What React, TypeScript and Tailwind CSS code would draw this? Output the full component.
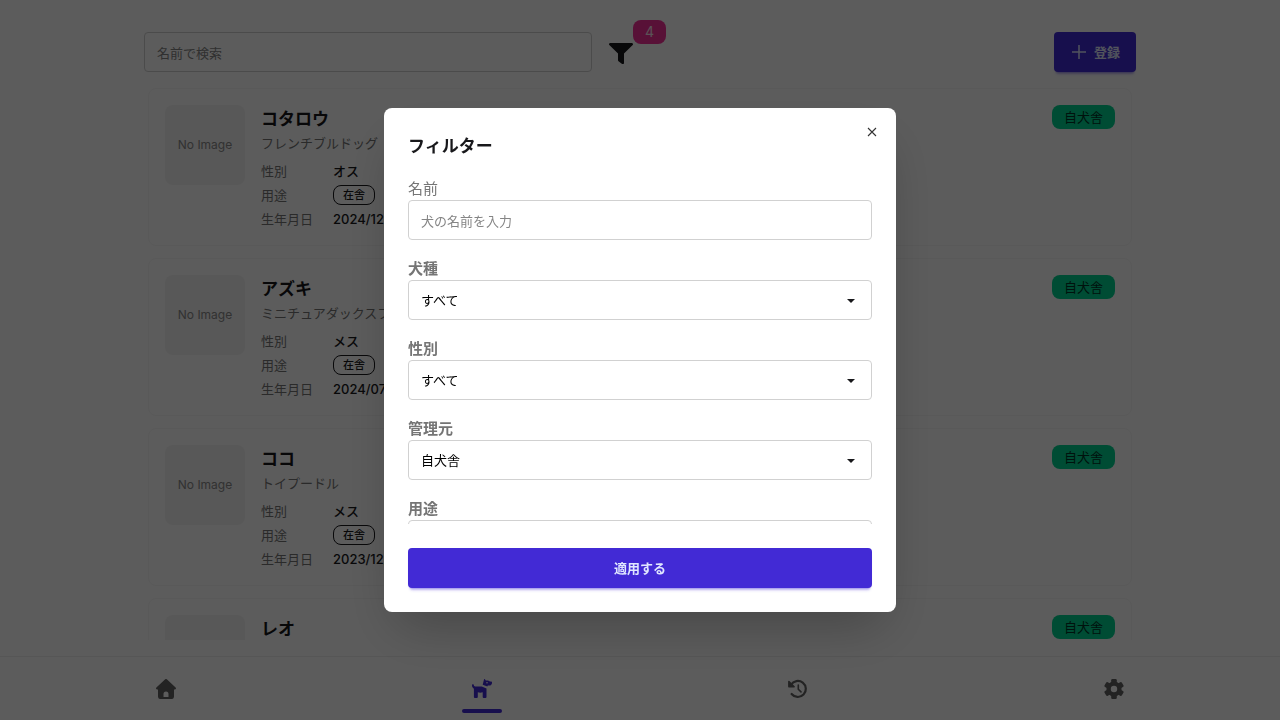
import type { ReactNode } from "react";

interface Dog {
  name: string;
  breed: string;
  sex: string;
  birthday: string;
}

const dogs: Dog[] = [
  { name: "コタロウ", breed: "フレンチブルドッグ", sex: "オス", birthday: "2024/12/10" },
  { name: "アズキ", breed: "ミニチュアダックスフンド", sex: "メス", birthday: "2024/07/15" },
  { name: "ココ", breed: "トイプードル", sex: "メス", birthday: "2023/12/20" },
  { name: "レオ", breed: "柴犬", sex: "オス", birthday: "2023/10/05" },
];

const selects = [
  { id: "breed", label: "犬種", value: "すべて" },
  { id: "sex", label: "性別", value: "すべて" },
  { id: "owner", label: "管理元", value: "自犬舎" },
  { id: "usage", label: "用途", value: "すべて" },
];

function FilterIcon() {
  return (
    <svg viewBox="0 0 24 24" className="size-6" fill="currentColor" aria-hidden="true">
      <path d="M1.2 3h21.6a1.2 1.2 0 0 1 .9 2L15 13.6V23a1.2 1.2 0 0 1-1.9 1l-3.6-2.8a1.4 1.4 0 0 1-.5-1.1v-6.5L.3 5a1.2 1.2 0 0 1 .9-2z" />
    </svg>
  );
}

function HomeIcon() {
  return (
    <svg viewBox="0 0 20 20" className="size-5" fill="currentColor" aria-hidden="true">
      <path
        fillRule="evenodd"
        d="M9.2.35a1.2 1.2 0 0 1 1.6 0l8.8 8.2a1.15 1.15 0 0 1-.8 2H18v7a2.5 2.5 0 0 1-2.5 2.5h-11A2.5 2.5 0 0 1 2 17.55v-7h-.8a1.15 1.15 0 0 1-.8-2zM7.5 18.1h5v-3.2a2.5 2.5 0 0 0-5 0z"
      />
    </svg>
  );
}

function DogIcon() {
  return (
    <svg viewBox="0 0 20 20" className="size-5" fill="currentColor" aria-hidden="true">
      {/* body, tail and legs */}
      <path d="M.9 5.2c.6 0 1 .5 1 1 0 .7.5 1.2 1.200 1.200h6.700l4.700 2V18a1 1 0 0 1-1 1h-1.800a1 1 0 0 1-1-1v-4.700c-1.600.5-3.300.5-4.900 0V18a1 1 0 0 1-1 1H2.900a1 1 0 0 1-1-1V9.700C.7 9.100 0 8 0 6.600c0-.9.2-1.400.9-1.400z" />
      {/* head */}
      <path
        fillRule="evenodd"
        d="M12 .6c.1-.6.8-.7 1.100-.2l.7 1h2c.6 0 1.100.2 1.500.6l.4.400h1.500c.5 0 .8.3.8.8v.8c0 1.500-1.200 2.600-2.700 2.600h-1.500l-.4 1-4.700-1.900zM15 2.900a.8.8 0 1 0 0 1.600.8.8 0 0 0 0-1.600z"
      />
    </svg>
  );
}

function HistoryIcon() {
  return (
    <svg viewBox="0 0 20 20" className="size-5" fill="none" stroke="currentColor" aria-hidden="true">
      <path d="M3 5.800A8 8 0 1 1 3.600 15" strokeWidth="2.200" strokeLinecap="round" />
      <path d="M10.300 6v4.200l2.700 2.700" strokeWidth="1.600" strokeLinecap="round" />
      <path d="M.9 2.600v5.200h5.200z" fill="currentColor" strokeWidth="1.600" strokeLinejoin="round" />
    </svg>
  );
}

function GearIcon() {
  return (
    <svg viewBox="0 0 20 20" className="size-5" fill="currentColor" aria-hidden="true">
      <circle cx="10" cy="10" r="5.4" fill="none" stroke="currentColor" strokeWidth="4.4" />
      {[0, 60, 120, 180, 240, 300].map((angle) => (
        <rect key={angle} x="7.2" y="0" width="5.6" height="5.5" rx="1.3" transform={`rotate(${angle} 10 10)`} />
      ))}
    </svg>
  );
}

function NavItem({ label, active, children }: { label: string; active?: boolean; children: ReactNode }) {
  return (
    <a
      href="#"
      aria-label={label}
      className={`flex flex-1 flex-col items-center pt-[22px] ${active ? "text-[#422ad5]" : "text-[#616161]"}`}
    >
      {children}
      {active && <span className="mt-2.5 h-1 w-10 rounded-full bg-[#422ad5]" />}
    </a>
  );
}

function DogCard({ dog }: { dog: Dog }) {
  return (
    <li className="flex shrink-0 gap-4 rounded-lg border border-[#f6f6f6] p-4">
      <div className="flex size-20 shrink-0 items-center justify-center rounded-lg bg-[#f3f3f3] text-xs text-[#8a8a8a]">
        No Image
      </div>
      <div className="flex-1">
        <div className="flex items-start justify-between">
          <h2 className="text-[17px] leading-7 font-semibold">{dog.name}</h2>
          <span className="h-6 rounded-lg bg-[#00d390] px-3 text-[13px] leading-6 text-[#003426]">自犬舎</span>
        </div>
        <p className="text-[13px] leading-5 text-[#747474]">{dog.breed}</p>
        <dl className="mt-2 grid grid-cols-[72px_1fr] gap-y-1 text-[13px] leading-5">
          <dt className="text-[#747474]">性別</dt>
          <dd className="font-medium">{dog.sex}</dd>
          <dt className="text-[#747474]">用途</dt>
          <dd className="flex">
            <span className="h-5 rounded-lg border border-[#18181b] px-[9px] text-[11px] leading-[18px] font-medium">在舎</span>
          </dd>
          <dt className="text-[#747474]">生年月日</dt>
          <dd className="font-medium">{dog.birthday}</dd>
        </dl>
      </div>
    </li>
  );
}

function FilterModal() {
  return (
    <div className="fixed inset-0 flex items-center justify-center bg-black/64">
      <div
        role="dialog"
        aria-labelledby="filter-title"
        className="relative flex h-[70vh] w-full max-w-lg flex-col rounded-lg bg-white p-6 shadow-2xl"
      >
        <button
          type="button"
          aria-label="閉じる"
          className="absolute top-2 right-2 flex size-8 items-center justify-center text-[#333333]"
        >
          <svg viewBox="0 0 10 10" className="size-2.5" stroke="currentColor" strokeWidth="1.1" aria-hidden="true">
            <path d="M1 1l8 8M9 1L1 9" />
          </svg>
        </button>
        <h3 id="filter-title" className="mb-4 text-[17px] leading-7 font-bold">
          フィルター
        </h3>

        {/* Scrolls when the fields don't fit */}
        <form className="flex min-h-0 flex-1 flex-col gap-4 overflow-x-hidden overflow-y-auto [scrollbar-width:none]">
          <div className="shrink-0">
            <label htmlFor="name" className="block pt-px text-[15px] leading-[23px] text-[#757575]">
              名前
            </label>
            <input
              id="name"
              type="text"
              placeholder="犬の名前を入力"
              className="block h-10 w-full rounded-sm border border-[#d1d1d1] px-3 pt-px text-[13px] placeholder:text-[#858585]"
            />
          </div>
          {selects.map((field) => (
            <div key={field.id} className="shrink-0">
              <label htmlFor={field.id} className="block pt-px text-[15px] leading-[23px] font-semibold text-[#757575]">
                {field.label}
              </label>
              <div className="relative">
                <select
                  id={field.id}
                  className="block h-10 w-full appearance-none rounded-sm border border-[#d1d1d1] bg-white px-3 pt-0.5 text-[13px] text-black"
                >
                  <option>{field.value}</option>
                </select>
                <svg
                  viewBox="0 0 8 4"
                  className="pointer-events-none absolute top-[19px] right-[17px] h-1 w-2"
                  fill="currentColor"
                  aria-hidden="true"
                >
                  <path d="M0 0h8L4 4z" />
                </svg>
              </div>
            </div>
          ))}
        </form>

        <button
          type="button"
          className="mt-6 h-10 shrink-0 rounded-sm bg-[#422ad5] pt-0.5 text-[13px] font-bold text-[#e0e7ff] shadow-[0_3px_2px_-2px_#422ad54d,0_4px_3px_-2px_#422ad54d]"
        >
          適用する
        </button>
      </div>
    </div>
  );
}

export default function App() {
  return (
    <div className="flex h-screen flex-col bg-white font-['Inter','Noto_Sans_CJK_JP',sans-serif] text-[#18181b]">
      <main className="mx-auto flex min-h-0 w-full max-w-5xl flex-1 flex-col px-4 pt-8 pb-4">
        <div className="mb-4 flex items-center justify-between">
          <div className="flex flex-1 items-center gap-px">
            <input
              type="text"
              aria-label="名前で検索"
              placeholder="名前で検索"
              className="h-10 w-full max-w-md rounded-sm border border-[#d1d1d1] px-3 pt-px text-[13px] placeholder:text-[#858585]"
            />
            <button type="button" aria-label="フィルター" className="relative flex h-10 items-center px-4">
              <FilterIcon />
              <span className="absolute -top-3 -right-[17px] h-6 rounded-lg bg-[#f43098] px-3 text-sm leading-6 text-[#f9e4f0]">
                4
              </span>
            </button>
          </div>
          <button
            type="button"
            className="flex h-10 items-center gap-1.5 rounded-sm bg-[#422ad5] px-4 text-[13px] font-bold text-[#e0e7ff] shadow-[0_3px_2px_-2px_#422ad54d,0_4px_3px_-2px_#422ad54d]"
          >
            <svg viewBox="0 0 18 18" className="size-[18px]" stroke="currentColor" strokeWidth="1.5" aria-hidden="true">
              <path d="M9 2v14M2 9h14" />
            </svg>
            <span className="pt-0.5">登録</span>
          </button>
        </div>

        <ul className="flex min-h-0 flex-1 flex-col gap-3 overflow-x-hidden overflow-y-auto px-1 [scrollbar-width:none]">
          {dogs.map((dog) => (
            <DogCard key={dog.name} dog={dog} />
          ))}
        </ul>
      </main>

      <nav className="flex h-16 shrink-0 border-t border-[#eeeeee] px-2">
        <NavItem label="ホーム">
          <HomeIcon />
        </NavItem>
        <NavItem label="犬" active>
          <DogIcon />
        </NavItem>
        <NavItem label="履歴">
          <HistoryIcon />
        </NavItem>
        <NavItem label="設定">
          <GearIcon />
        </NavItem>
      </nav>

      <FilterModal />
    </div>
  );
}
